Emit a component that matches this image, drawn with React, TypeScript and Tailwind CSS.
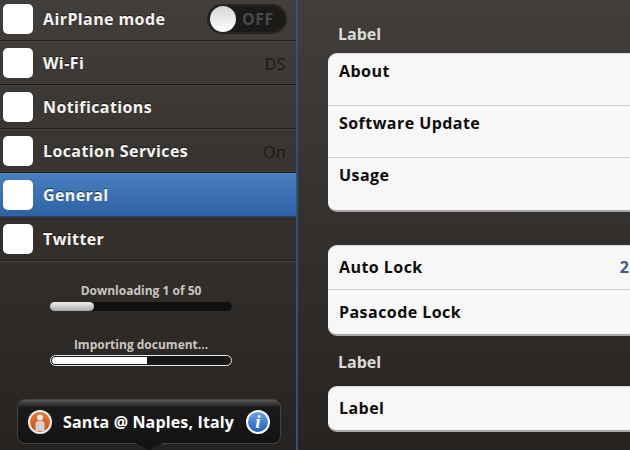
const ROWS = [
  { label: 'AirPlane mode', toggle: true },
  { label: 'Wi-Fi', value: 'DS' },
  { label: 'Notifications' },
  { label: 'Location Services', value: 'On' },
  { label: 'General', active: true },
  { label: 'Twitter' },
];

function OffSwitch() {
  return (
    <div className="flex h-[30px] w-[80px] items-center rounded-full border-2 border-[#262321] bg-[#1c1a19] pl-px">
      <div className="h-[26px] w-[26px] rounded-full bg-gradient-to-b from-[#d6d6d6] to-white" />
      <span className="ml-[6px] text-[16px] leading-none font-bold tracking-[0.5px] text-[#4b4947]">OFF</span>
    </div>
  );
}

function SideRow({ label, value, toggle, active }: { label: string; value?: string; toggle?: boolean; active?: boolean }) {
  return (
    <div
      className={
        active
          ? 'flex h-[44px] items-center border-b border-[#1f3f66] bg-gradient-to-b from-[#4a80c0] to-[#2c62a4] pr-[10px] pl-[3px]'
          : 'flex h-[44px] items-center border-b border-[#211e1c] pr-[10px] pl-[3px] shadow-[0_1px_0_#45413e]'
      }
    >
      <div className="h-[30px] w-[30px] rounded-[5px] bg-white" />
      <span className="ml-[10px] text-[16px] font-bold tracking-[0.4px] text-[#f4f4f2] [text-shadow:0_-1px_0_rgba(0,0,0,0.5)]">{label}</span>
      {toggle && (
        <div className="ml-auto -mr-[1px]">
          <OffSwitch />
        </div>
      )}
      {value && <span className="mt-[3px] ml-auto text-[16px] font-medium tracking-[0.4px] text-[#1b1918]">{value}</span>}
    </div>
  );
}

function UserBadge() {
  return (
    <svg width="24" height="24" viewBox="0 0 24 24">
      <defs>
        <linearGradient id="badge" x1="0" y1="0" x2="0" y2="1">
          <stop offset="0" stopColor="#e8772c" />
          <stop offset="1" stopColor="#c9521c" />
        </linearGradient>
      </defs>
      <circle cx="12" cy="12" r="11" fill="url(#badge)" stroke="#f4f0ec" strokeWidth="2" />
      <circle cx="12" cy="7.5" r="3" fill="#f5f2ef" />
      <path d="M7.5 21V14Q7.5 11 10.5 11H13.5Q16.5 11 16.5 14V21Z" fill="#d2cfcc" />
    </svg>
  );
}

function SidePanel() {
  return (
    <div className="flex h-full w-[296px] shrink-0 flex-col">
      <div className="-mt-[3px]">
        {ROWS.map((r) => (
          <SideRow key={r.label} {...r} />
        ))}
      </div>
      <div className="mt-[21px] flex w-[282px] flex-col items-center">
        <span className="text-[12px] leading-[18px] font-bold text-[#c9c6c2]">Downloading 1 of 50</span>
        <div className="mt-[2px] h-[9px] w-[182px] rounded-full bg-[#111010]">
          <div className="h-full w-[44px] rounded-full bg-gradient-to-b from-[#f0f0f0] to-[#aaa9a8]" />
        </div>
        <span className="mt-[25px] text-[12px] leading-[18px] font-bold text-[#c9c6c2]">Importing document...</span>
        <div className="mt-px h-[11px] w-[182px] rounded-full border border-[#e8e8e8] bg-[#1a1817] p-px">
          <div className="h-full w-[95px] rounded-l-full bg-white" />
        </div>
      </div>
      <div className="relative mt-[33px] ml-[17px] flex h-[45px] w-[264px] items-center rounded-[8px] border border-[#45423f] bg-gradient-to-b from-[#5a5856] via-[#1b1a1a] via-[18%] to-[#141313] px-[10px]">
        <UserBadge />
        <span className="ml-[11px] text-[16px] font-bold tracking-[0.15px] text-white">Santa @ Naples, Italy</span>
        <div className="ml-auto flex h-[24px] w-[24px] items-center justify-center rounded-full border-2 border-white bg-gradient-to-b from-[#6aa0e6] to-[#1f62c0]">
          <span className="font-['Liberation_Serif',serif] text-[19px] leading-none font-bold text-white italic">i</span>
        </div>
        <div className="absolute -bottom-[7px] left-[117px] h-0 w-0 border-x-[14px] border-t-[7px] border-x-transparent border-t-[#141313]" />
      </div>
    </div>
  );
}

function Card({ rows, tall, short }: { rows: { label: string; value?: string }[]; tall?: boolean; short?: boolean }) {
  return (
    <div className="-mr-[20px] overflow-hidden rounded-[9px] border-t border-b-2 border-t-[#d8d8d8] border-b-[#a9a8a7] bg-[#f7f7f7]">
      {rows.map((r, i) => (
        <div
          key={r.label}
          className={
            (tall ? 'h-[52px] items-start pt-[5px] ' : short ? 'h-[43px] items-center pb-px ' : 'h-[44px] items-center pb-px ') +
            'flex justify-between px-[11px] ' +
            (i < rows.length - 1 ? 'border-b border-[#cfcfcf]' : '')
          }
        >
          <span className="text-[16px] font-bold tracking-[0.45px] text-[#0c0c0c]">{r.label}</span>
          {r.value && <span className="mr-[10px] text-[16px] font-bold text-[#3f5a88]">{r.value}</span>}
        </div>
      ))}
    </div>
  );
}

export default function App() {
  return (
    <div className="flex h-[450px] w-[630px] overflow-hidden bg-gradient-to-b from-[#423e3b] to-[#272321] font-['Open_Sans',sans-serif]">
      <SidePanel />
      <div className="w-[2px] shrink-0 bg-[#2c557e]" />
      <div className="min-w-0 flex-1 pt-[23px] pl-[30px]">
        <div className="pl-[10px] text-[16px] leading-[22px] font-bold text-[#dcdad7]">Label</div>
        <div className="mt-[8px]">
          <Card tall rows={[{ label: 'About' }, { label: 'Software Update' }, { label: 'Usage' }]} />
        </div>
        <div className="mt-[33px]">
          <Card rows={[{ label: 'Auto Lock', value: '2' }, { label: 'Pasacode Lock' }]} />
        </div>
        <div className="mt-[15px] pl-[10px] text-[16px] leading-[22px] font-bold text-[#dcdad7]">Label</div>
        <div className="mt-[13px]">
          <Card short rows={[{ label: 'Label' }]} />
        </div>
      </div>
    </div>
  );
}
